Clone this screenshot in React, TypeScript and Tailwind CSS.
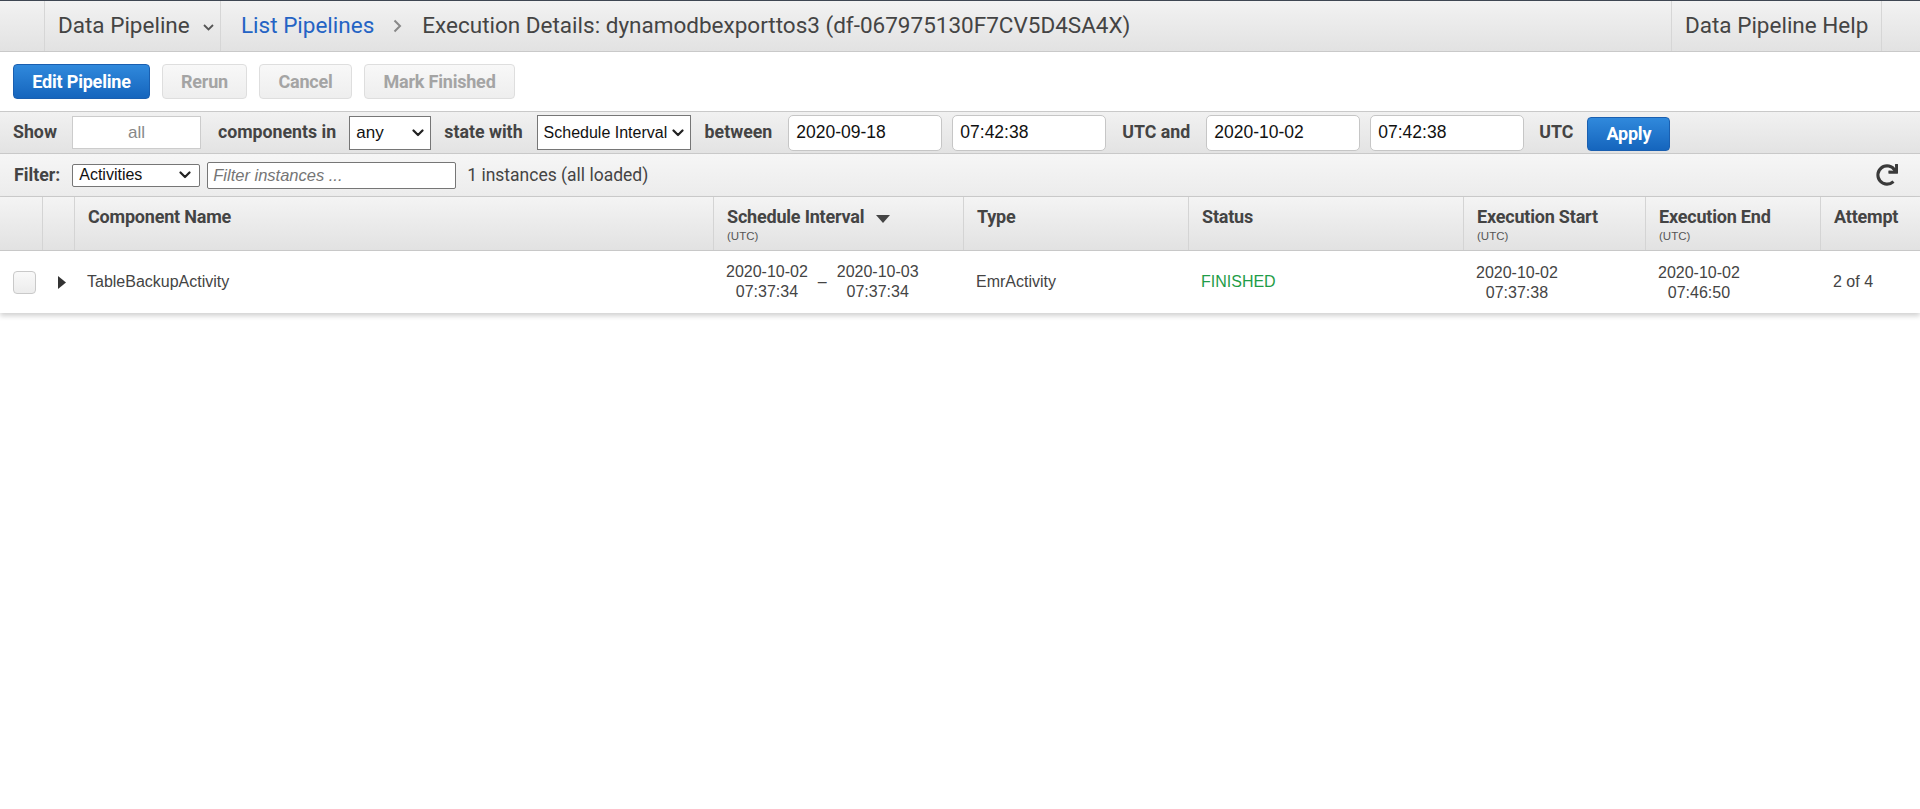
import React from "react";
import { FaRedo } from "react-icons/fa";

const ARIAL = "font-['Liberation_Sans',Arial,sans-serif]";
const ROBOTO = "font-['Roboto',sans-serif]";

function Chevron({ className = "" }: { className?: string }) {
  return (
    <svg width="12" height="8" viewBox="0 0 12 8" className={className}>
      <path d="M1.5 1.5 L6 6 L10.5 1.5" fill="none" stroke="#222" strokeWidth="2.2" strokeLinecap="round" strokeLinejoin="round" />
    </svg>
  );
}

function SelectBox({ value, className = "" }: { value: string; className?: string }) {
  return (
    <div className={`flex items-center justify-between border border-[#767676] bg-white pl-[6px] pr-[6px] text-[16px] text-[#111] ${ARIAL} ${className}`}>
      <span className="whitespace-nowrap">{value}</span>
      <Chevron />
    </div>
  );
}

function Label({ children, className = "" }: { children: React.ReactNode; className?: string }) {
  return <span className={`${ROBOTO} text-[17.75px] font-bold text-[#444] whitespace-nowrap ${className}`}>{children}</span>;
}

function TextBox({ value, className = "" }: { value: string; className?: string }) {
  return (
    <div className={`flex items-center rounded-[5px] border border-[#c6c6c6] bg-white pl-[7px] text-[17.5px] text-[#111] ${ARIAL} ${className}`}>
      {value}
    </div>
  );
}

function DisabledBtn({ label, w }: { label: string; w: string }) {
  return (
    <div className={`${w} flex h-[35px] items-center justify-center rounded-[4px] border border-[#dedede] bg-gradient-to-b from-[#f8f8f8] to-[#eeeeee] ${ROBOTO} text-[18px] font-bold tracking-[-0.2px] text-[#a4a4a4]`}>
      {label}
    </div>
  );
}

function BlueBtn({ label, w, h }: { label: string; w: string; h: string }) {
  return (
    <div className={`${w} ${h} flex items-center justify-center rounded-[4px] border border-[#1a5fb0] bg-gradient-to-b from-[#3089dc] to-[#1565bd] ${ROBOTO} text-[18px] font-bold tracking-[-0.2px] text-white`}>
      {label}
    </div>
  );
}

function HeadCell({ title, utc, sort, first }: { title?: string; utc?: boolean; sort?: boolean; first?: boolean }) {
  return (
    <div className={`${first ? "" : "border-l border-[#d4d4d4]"} pl-[13px] pt-[9px] ${ROBOTO}`}>
      {title && (
        <div className="flex items-center">
          <span className="text-[18px] font-bold leading-[22px] tracking-[-0.2px] text-[#444] whitespace-nowrap">{title}</span>
          {sort && (
            <svg width="14" height="8" viewBox="0 0 14 8" className="ml-[12px] mt-[4px]">
              <path d="M0 0 L14 0 L7 8 Z" fill="#444" />
            </svg>
          )}
        </div>
      )}
      {utc && <div className={`${ARIAL} mt-[1px] text-[11.5px] leading-[14px] text-[#555]`}>(UTC)</div>}
    </div>
  );
}

function TwoLine({ a, b }: { a: string; b: string }) {
  return (
    <div className="inline-flex flex-col items-center leading-[20px]">
      <span>{a}</span>
      <span>{b}</span>
    </div>
  );
}

export default function App() {
  const cols = "grid grid-cols-[42px_32px_639px_250px_225px_275px_182px_175px_1fr]";
  return (
    <div className="h-[809px] w-[1920px] overflow-hidden bg-white">
      {/* Top bar */}
      <div className={`flex h-[52px] items-stretch border-t border-b border-t-[#3e4652] border-b-[#c9c9c9] bg-gradient-to-b from-[#f2f2f2] to-[#e2e2e2] ${ROBOTO} text-[22.5px] text-[#444]`}>
        <div className="w-[44px]" />
        <div className="flex w-[176px] items-center border-l border-[#d6d6d6] pl-[13px]">
          <span className="whitespace-nowrap">Data Pipeline</span>
          <svg width="11" height="7" viewBox="0 0 11 7" className="ml-[13px] mt-[3px]">
            <path d="M1 1 L5.5 5.5 L10 1" fill="none" stroke="#555" strokeWidth="1.8" />
          </svg>
        </div>
        <div className="flex flex-1 items-center border-l border-[#d6d6d6] pl-[20px]">
          <span className="whitespace-nowrap text-[#2463c4]">List Pipelines</span>
          <svg width="9" height="14" viewBox="0 0 9 14" className="ml-[19px] mr-[20px]">
            <path d="M1.5 1.5 L7 7 L1.5 12.5" fill="none" stroke="#888" strokeWidth="2" />
          </svg>
          <span className="whitespace-nowrap">Execution Details: dynamodbexporttos3 (df-067975130F7CV5D4SA4X)</span>
        </div>
        <div className="flex w-[211px] items-center border-x border-[#d6d6d6] pl-[13px]">
          <span className="whitespace-nowrap">Data Pipeline Help</span>
        </div>
        <div className="w-[38px]" />
      </div>

      {/* Action buttons */}
      <div className="flex h-[59px] items-start gap-[12px] pl-[13px] pt-[12px]">
        <BlueBtn label="Edit Pipeline" w="w-[137px]" h="h-[35px]" />
        <DisabledBtn label="Rerun" w="w-[85px]" />
        <DisabledBtn label="Cancel" w="w-[93px]" />
        <DisabledBtn label="Mark Finished" w="w-[151px]" />
      </div>

      {/* Show bar */}
      <div className="flex h-[43px] items-center border-y border-[#c9c9c9] bg-gradient-to-b from-[#f1f1f1] to-[#e3e3e3] pl-[13px]">
        <Label>Show</Label>
        <div className={`ml-[15px] flex h-[33px] w-[129px] items-center justify-center border border-[#cccccc] bg-white text-[17px] text-[#888] ${ARIAL}`}>all</div>
        <Label className="ml-[17px]">components in</Label>
        <SelectBox value="any" className="ml-[13px] h-[34px] w-[82px] text-[17px]" />
        <Label className="ml-[13px]">state with</Label>
        <SelectBox value="Schedule Interval" className="ml-[14px] h-[35px] w-[154px]" />
        <Label className="ml-[14px]">between</Label>
        <TextBox value="2020-09-18" className="ml-[16px] h-[36px] w-[154px]" />
        <TextBox value="07:42:38" className="ml-[10px] h-[36px] w-[154px]" />
        <Label className="ml-[16px]">UTC and</Label>
        <TextBox value="2020-10-02" className="ml-[16px] h-[36px] w-[154px]" />
        <TextBox value="07:42:38" className="ml-[10px] h-[36px] w-[154px]" />
        <Label className="ml-[15px]">UTC</Label>
        <div className="ml-[14px] mt-[2px]">
          <BlueBtn label="Apply" w="w-[83px]" h="h-[34px]" />
        </div>
      </div>

      {/* Filter row */}
      <div className="flex h-[43px] items-center border-b border-[#cdcdcd] bg-gradient-to-b from-[#f6f6f6] to-[#ececec] pl-[14px] pr-[22px]">
        <Label className="text-[17.5px]">Filter:</Label>
        <SelectBox value="Activities" className="ml-[12px] h-[23px] w-[128px] rounded-[2px] pl-[5px] pr-[8px]" />
        <div className={`ml-[7px] flex h-[27px] w-[249px] items-center rounded-[2px] border border-[#767676] bg-white pl-[5px] text-[16.5px] italic text-[#757575] ${ARIAL}`}>
          Filter instances ...
        </div>
        <span className={`${ROBOTO} ml-[11px] text-[17.5px] text-[#444] whitespace-nowrap`}>1 instances (all loaded)</span>
        <div className="flex-1" />
        <FaRedo className="h-[22px] w-[22px] text-[#3a3a3a]" />
      </div>

      {/* Table */}
      <div className="shadow-[0_3px_5px_rgba(0,0,0,0.18)]">
        <div className={`${cols} h-[54px] border-b border-[#c8c8c8] bg-gradient-to-b from-[#f4f4f4] to-[#e2e2e2]`}>
          <HeadCell first />
          <HeadCell />
          <HeadCell title="Component Name" />
          <HeadCell title="Schedule Interval" utc sort />
          <HeadCell title="Type" />
          <HeadCell title="Status" />
          <HeadCell title="Execution Start" utc />
          <HeadCell title="Execution End" utc />
          <HeadCell title="Attempt" />
        </div>
        <div className={`${cols} h-[62px] items-center bg-white ${ARIAL} text-[16px] text-[#444]`}>
          <div className="pl-[13px]">
            <div className="h-[23px] w-[23px] rounded-[4px] border border-[#c9c9c9] bg-gradient-to-b from-[#f9f9f9] to-[#ececec]" />
          </div>
          <div className="pl-[16px]">
            <svg width="8" height="13" viewBox="0 0 8 13">
              <path d="M0 0 L8 6.5 L0 13 Z" fill="#333" />
            </svg>
          </div>
          <div className="pl-[13px]">TableBackupActivity</div>
          <div className="flex items-center pl-[13px]">
            <TwoLine a="2020-10-02" b="07:37:34" />
            <span className="mx-[10px]">–</span>
            <TwoLine a="2020-10-03" b="07:37:34" />
          </div>
          <div className="pl-[13px]">EmrActivity</div>
          <div className="pl-[13px] text-[#1f9d48]">FINISHED</div>
          <div className="pl-[13px]">
            <TwoLine a="2020-10-02" b="07:37:38" />
          </div>
          <div className="pl-[13px]">
            <TwoLine a="2020-10-02" b="07:46:50" />
          </div>
          <div className="pl-[13px]">2 of 4</div>
        </div>
      </div>
    </div>
  );
}
